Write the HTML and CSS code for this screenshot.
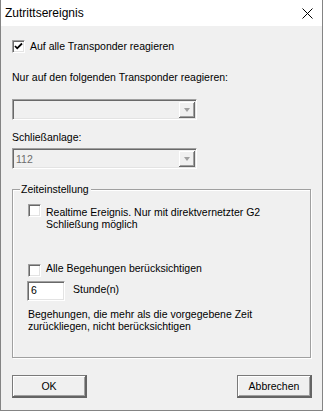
FILE: index.html
```html
<!DOCTYPE html>
<html lang="de">
  <head>
    <meta charset="UTF-8" />
    <title>Zutrittsereignis</title>
    <link rel="stylesheet" href="styles.css">
  </head>
  <body>
    <div class="window">
      <div class="titlebar">
        <span class="title">Zutrittsereignis</span>
        <span class="close">
          <svg width="11" height="11" viewBox="0 0 11 11">
            <path d="M0.5 0.5 L10.5 10.5 M10.5 0.5 L0.5 10.5" stroke="#000" stroke-width="1" fill="none" />
          </svg>
        </span>
      </div>

      <div class="content">
        <label class="check-row all-check">
          <span class="checkbox">
            <svg width="9" height="9" viewBox="0 0 9 9">
              <path d="M1 4 L3.2 6.3 L8 1.5" stroke="#000" stroke-width="1.8" fill="none" />
            </svg>
          </span>
          <span class="check-text">Auf alle Transponder reagieren</span>
        </label>

        <div class="field-label label-transponder">Nur auf den folgenden Transponder reagieren:</div>
        <div class="combo combo-transponder">
          <span class="combo-value"></span>
          <span class="combo-button"><span class="arrow"></span></span>
        </div>

        <div class="field-label label-anlage">Schließanlage:</div>
        <div class="combo combo-anlage">
          <span class="combo-value">112</span>
          <span class="combo-button"><span class="arrow"></span></span>
        </div>

        <div class="group">
          <span class="legend">Zeiteinstellung</span>

          <label class="check-row realtime">
            <span class="checkbox"></span>
            <span class="check-text multi">Realtime Ereignis. Nur mit direktvernetzter G2<br />Schließung möglich</span>
          </label>

          <label class="check-row all-entries">
            <span class="checkbox"></span>
            <span class="check-text">Alle Begehungen berücksichtigen</span>
          </label>

          <div class="hours-row">
            <span class="textbox">6</span>
            <span class="hours-label">Stunde(n)</span>
          </div>

          <p class="hint">Begehungen, die mehr als die vorgegebene Zeit<br />zurückliegen, nicht berücksichtigen</p>
        </div>

        <div class="buttons">
          <button class="btn">OK</button>
          <button class="btn">Abbrechen</button>
        </div>
      </div>
    </div>
  </body>
</html>
```

FILE: styles.css
```css
body {
  margin: 0;
  padding: 0;
  background-color: #f0f0f0;
}

.window {
  width: 323px;
  height: 411px;
  box-sizing: border-box;
  border: 1px solid #848484;
  border-top: none;
  background-color: #f0f0f0;
  font-family: "Liberation Sans", Arial, sans-serif;
  font-size: 10.5px;
  color: #000;
  overflow: hidden;
}

.titlebar {
  height: 26px;
  background-color: #fff;
  display: flex;
  align-items: center;
  justify-content: space-between;
  padding-left: 4px;
  padding-right: 9px;
}

.title {
  font-size: 12px;
  line-height: 26px;
}

.close {
  display: flex;
  margin-top: 1px;
}

.content {
  padding: 0 11px;
}

/* checkboxes */
.check-row {
  display: flex;
  align-items: flex-start;
}

.checkbox {
  width: 13px;
  height: 13px;
  box-sizing: border-box;
  flex-shrink: 0;
  background-color: #fff;
  border-top: 1px solid #a0a0a0;
  border-left: 1px solid #a0a0a0;
  border-right: 1px solid #fff;
  border-bottom: 1px solid #fff;
  box-shadow: inset 1px 1px #696969, inset -1px -1px #e3e3e3;
  display: flex;
  align-items: center;
  justify-content: center;
}

.check-text {
  margin-left: 5px;
  line-height: 13px;
  white-space: nowrap;
}

.check-text.multi {
  line-height: 11.5px;
  padding-top: 3px;
}

.all-check {
  margin-top: 14px;
}

/* labels and combos */
.field-label {
  line-height: 13px;
}

.label-transponder {
  margin-top: 18px;
}

.label-anlage {
  margin-top: 11px;
}

.combo {
  width: 185px;
  height: 21px;
  box-sizing: border-box;
  display: flex;
  justify-content: space-between;
  border-top: 1px solid #a0a0a0;
  border-left: 1px solid #a0a0a0;
  border-right: 1px solid #fff;
  border-bottom: 1px solid #fff;
  box-shadow: inset 1px 1px #696969, inset -1px -1px #e3e3e3;
  background-color: #f0f0f0;
  padding: 2px 1px 1px 2px;
}

.combo-transponder {
  margin-top: 15px;
}

.combo-anlage {
  margin-top: 4px;
}

.combo-value {
  color: #6d6d6d;
  line-height: 17px;
  padding-left: 1px;
}

.combo-button {
  width: 16px;
  height: 16px;
  box-sizing: border-box;
  background-color: #f0f0f0;
  border-right: 1px solid #696969;
  border-bottom: 1px solid #696969;
  box-shadow: inset 1px 1px #fff, inset -1px -1px #a0a0a0;
  display: flex;
  align-items: center;
  justify-content: center;
}

.arrow {
  width: 0;
  height: 0;
  border-left: 3.5px solid transparent;
  border-right: 3.5px solid transparent;
  border-top: 4px solid #a0a0a0;
  margin-left: 1px;
}

/* group box */
.group {
  position: relative;
  margin-top: 20px;
  height: 169px;
  box-sizing: border-box;
  border: 1px solid #a0a0a0;
  box-shadow: inset 1px 1px #fff, 1px 1px #fff;
  padding: 14px 15px 0 15px;
}

.legend {
  position: absolute;
  top: -7px;
  left: 7px;
  padding: 0 2px 0 1px;
  background-color: #f0f0f0;
  line-height: 13px;
}

.all-entries {
  margin-top: 34px;
}

.all-entries .check-text {
  margin-top: -2px;
}

.hours-row {
  display: flex;
  align-items: flex-start;
  margin-top: 4px;
  margin-left: -1px;
}

.textbox {
  width: 38px;
  height: 20px;
  box-sizing: border-box;
  background-color: #fff;
  border-top: 1px solid #a0a0a0;
  border-left: 1px solid #a0a0a0;
  border-right: 1px solid #fff;
  border-bottom: 1px solid #fff;
  box-shadow: inset 1px 1px #696969, inset -1px -1px #e3e3e3;
  padding: 2px 0 0 3px;
  line-height: 13px;
}

.hours-label {
  margin-left: 8px;
  margin-top: 2px;
  line-height: 13px;
}

.hint {
  margin: 8px 0 0 0;
  line-height: 11.5px;
}

/* buttons */
.buttons {
  display: flex;
  justify-content: space-between;
  margin-top: 17px;
  margin-right: -1px;
}

.btn {
  width: 75px;
  height: 23px;
  box-sizing: border-box;
  font-family: "Liberation Sans", Arial, sans-serif;
  font-size: 10.5px;
  color: #000;
  background-color: #f0f0f0;
  border-top: 1px solid #7a7a7a;
  border-left: 1px solid #7a7a7a;
  border-right: 2px solid #646464;
  border-bottom: 2px solid #646464;
  box-shadow: inset 1px 1px #fff, inset -1px -1px #a0a0a0;
  padding: 0;
}
```
